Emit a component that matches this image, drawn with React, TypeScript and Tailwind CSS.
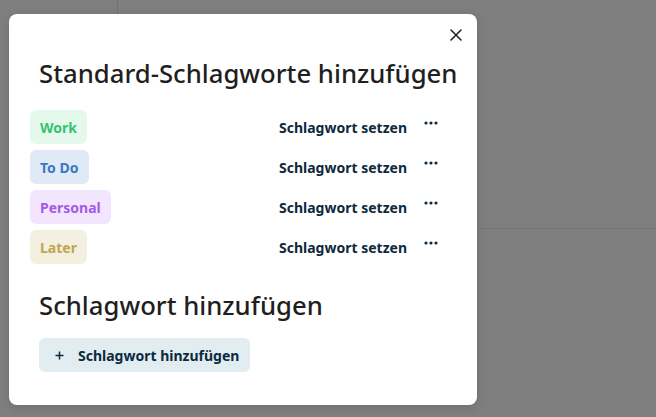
import { FC } from "react";

type Tag = { name: string; text: string; bg: string };

const tags: Tag[] = [
  { name: "Work", text: "text-[#36c275]", bg: "bg-[#e4f8ec]" },
  { name: "To Do", text: "text-[#3a78c4]", bg: "bg-[#e0e9f6]" },
  { name: "Personal", text: "text-[#a45be6]", bg: "bg-[#f3e5fd]" },
  { name: "Later", text: "text-[#bfa654]", bg: "bg-[#f3f0df]" },
];

const Dots: FC = () => (
  <svg width="14" height="4" viewBox="0 0 14 4" className="-mt-[8px]">
    <circle cx="2" cy="2" r="1.6" fill="#0c2a3e" />
    <circle cx="7" cy="2" r="1.6" fill="#0c2a3e" />
    <circle cx="12" cy="2" r="1.6" fill="#0c2a3e" />
  </svg>
);

const App: FC = () => {
  return (
    <div className="relative min-h-screen h-[417px] overflow-hidden bg-[#7f7f7f] font-['Noto_Sans',sans-serif]">
      {/* page behind the overlay */}
      <div className="absolute left-[117px] top-0 h-[20px] w-px bg-[#727272]" />
      <div className="absolute left-[480px] right-0 top-[228px] h-px bg-[#757575]" />

      <div className="relative ml-[9px] mt-[14px] h-[391px] w-[468px] rounded-lg bg-white pl-[21px] pr-[34px] pt-[42px] shadow-[0_2px_12px_rgba(0,0,0,0.15)]">
        <button className="absolute right-[15px] top-[15px] flex h-[12px] w-[12px] items-center justify-center text-[#222]">
          <svg width="12" height="12" viewBox="0 0 12 12">
            <path d="M1 1L11 11M11 1L1 11" stroke="currentColor" strokeWidth="1.6" strokeLinecap="round" />
          </svg>
        </button>

        <h2 className="ml-[9px] text-[25.7px] font-medium leading-[36px] text-[#1f1f1f] whitespace-nowrap">
          Standard-Schlagworte hinzufügen
        </h2>

        <div className="mt-[18px] flex flex-col gap-[6px]">
          {tags.map((t) => (
            <div key={t.name} className="flex h-[34px] items-center">
              <span className={`flex h-[34px] items-center rounded-md px-[10px] text-[14px] font-bold ${t.bg} ${t.text}`}>
                {t.name}
              </span>
              <span className="ml-auto text-[14px] font-bold text-[#0c2a3e]">Schlagwort setzen</span>
              <span className="ml-[12px] flex w-[24px] items-center justify-center">
                <Dots />
              </span>
            </div>
          ))}
        </div>

        <h2 className="ml-[9px] mt-[24px] text-[25.7px] font-medium leading-[36px] text-[#1f1f1f] whitespace-nowrap">
          Schlagwort hinzufügen
        </h2>

        <button className="ml-[9px] mt-[14px] flex h-[34px] items-center rounded-md bg-[#e2edf2] pl-[16px] pr-[11px] text-[14px] font-bold text-[#0c2a3e]">
          <svg width="9" height="9" viewBox="0 0 9 9" className="mr-[14px]">
            <path d="M4.5 0.5V8.5M0.5 4.5H8.5" stroke="currentColor" strokeWidth="1.5" />
          </svg>
          Schlagwort hinzufügen
        </button>
      </div>
    </div>
  );
};

export default App;
